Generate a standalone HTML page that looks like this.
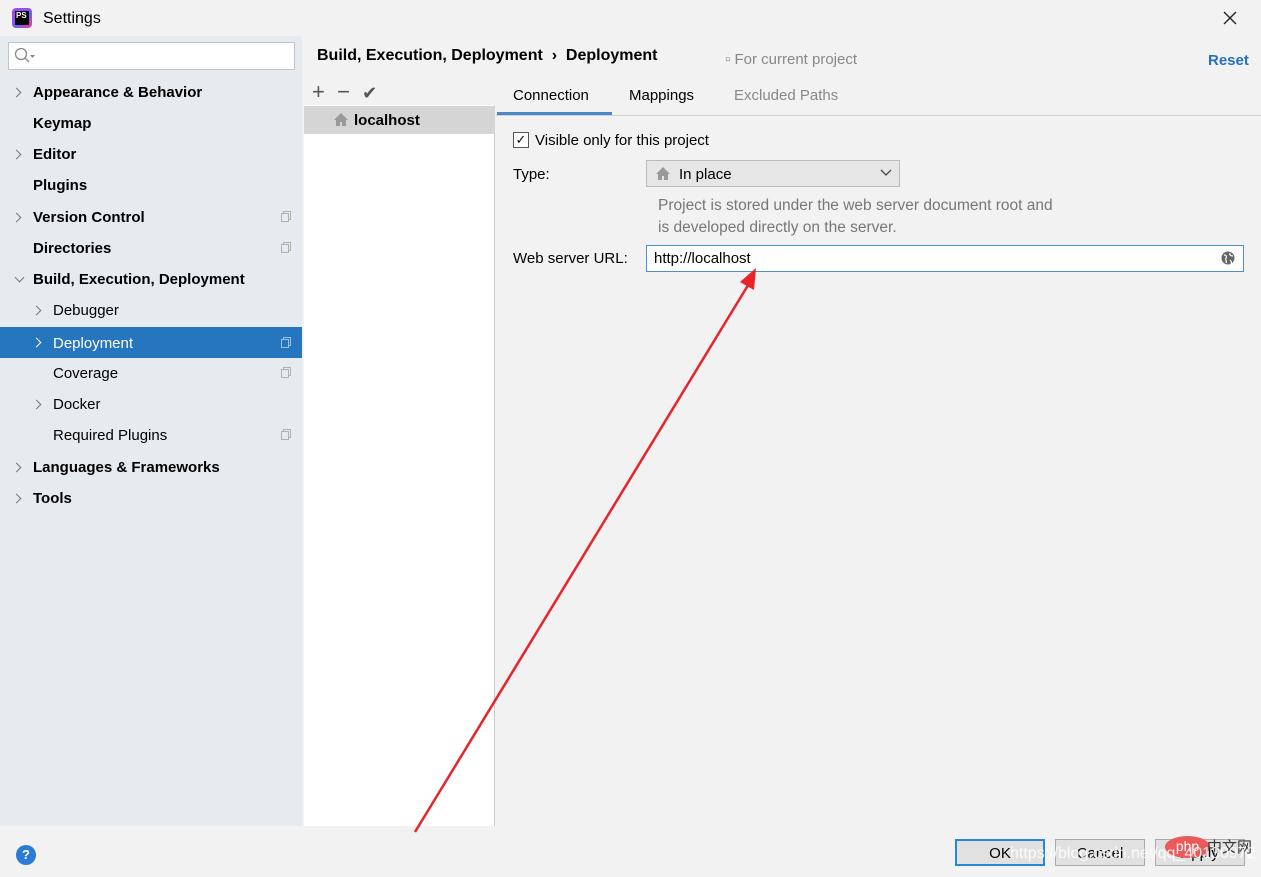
<!DOCTYPE html><html><head><style>
*{margin:0;padding:0;box-sizing:border-box}
body{width:1261px;height:877px;background:#f2f2f2;font-family:"Liberation Sans","DejaVu Sans",sans-serif;font-size:15px;color:#000;position:relative;overflow:hidden}
.a{position:absolute}
.side{left:0;top:36px;width:302px;height:790px;background:#e6ebf0}
.row{position:absolute;left:0;width:302px;height:31px;line-height:33px}
.b{font-weight:bold}
.chev{position:absolute;width:7px;height:7px;border-right:1.5px solid #777;border-bottom:1.5px solid #777}
.cp{position:absolute;right:13px;top:12px;width:8px;height:9px;border:1px solid #b0b0b0;box-shadow:2px -2px 0 -1px #e6ebf0,2px -2px 0 0 #b0b0b0}
</style></head><body>
<div class="a" style="left:12px;top:8px;width:20px;height:20px;background:linear-gradient(135deg,#b345f1,#765af8 60%,#ff318c);border-radius:4px"></div>
<div class="a" style="left:15px;top:11px;width:14px;height:14px;background:#000;color:#fff;font-size:8px;font-weight:bold;line-height:9px;padding-left:1px">PS</div>
<div class="a" style="left:43px;top:10px;font-size:16px">Settings</div>
<svg class="a" style="left:1223px;top:11px" width="14" height="14"><path d="M1 1L13 13M13 1L1 13" stroke="#222" stroke-width="1.4"/></svg>
<div class="a side"></div>
<div class="a" style="left:8px;top:42px;width:287px;height:28px;background:#fff;border:1px solid #c4c4c4"></div>
<svg class="a" style="left:14px;top:47px" width="24" height="18"><circle cx="7" cy="7" r="5.5" fill="none" stroke="#888" stroke-width="1.3"/><line x1="11" y1="11" x2="15" y2="15" stroke="#888" stroke-width="1.3"/><path d="M16 8h5l-2.5 3z" fill="#888"/></svg>
<div class="row b" style="top:76px;padding-left:33px">Appearance &amp; Behavior</div>
<div class="row b" style="top:107px;padding-left:33px">Keymap</div>
<div class="row b" style="top:138px;padding-left:33px">Editor</div>
<div class="row b" style="top:169px;padding-left:33px">Plugins</div>
<div class="row b" style="top:201px;padding-left:33px">Version Control<span class="cp"></span></div>
<div class="row b" style="top:232px;padding-left:33px">Directories<span class="cp"></span></div>
<div class="row b" style="top:263px;padding-left:33px">Build, Execution, Deployment</div>
<div class="row" style="top:294px;padding-left:53px">Debugger</div>
<div class="row" style="top:327px;padding-left:53px;background:#2675bf;color:#fff">Deployment<span class="cp" style="border-color:#9bc0e4;box-shadow:2px -2px 0 -1px #2675bf,2px -2px 0 0 #9bc0e4"></span></div>
<div class="row" style="top:357px;padding-left:53px">Coverage<span class="cp"></span></div>
<div class="row" style="top:388px;padding-left:53px">Docker</div>
<div class="row" style="top:419px;padding-left:53px">Required Plugins<span class="cp"></span></div>
<div class="row b" style="top:451px;padding-left:33px">Languages &amp; Frameworks</div>
<div class="row b" style="top:482px;padding-left:33px">Tools</div>
<div class="chev" style="left:13px;top:89px;transform:rotate(-45deg)"></div>
<div class="chev" style="left:13px;top:151px;transform:rotate(-45deg)"></div>
<div class="chev" style="left:13px;top:214px;transform:rotate(-45deg)"></div>
<div class="chev" style="left:16px;top:274px;transform:rotate(45deg)"></div>
<div class="chev" style="left:33px;top:307px;transform:rotate(-45deg)"></div>
<div class="chev" style="left:33px;top:339px;transform:rotate(-45deg);border-color:#fff"></div>
<div class="chev" style="left:33px;top:401px;transform:rotate(-45deg)"></div>
<div class="chev" style="left:13px;top:464px;transform:rotate(-45deg)"></div>
<div class="chev" style="left:13px;top:495px;transform:rotate(-45deg)"></div>
<div class="a b" style="left:317px;top:47px;font-size:16px">Build, Execution, Deployment &nbsp;›&nbsp; Deployment</div>
<div class="a" style="left:725px;top:51px;color:#888">▫ For current project</div>
<div class="a b" style="left:1208px;top:52px;color:#2470c4">Reset</div>
<div class="a" style="left:304px;top:76px;width:191px;height:750px;background:#fff;border-right:1px solid #c9c9c9"></div>
<div class="a" style="left:304px;top:76px;width:191px;height:29px;background:#f2f2f2"></div>
<div class="a" style="left:312px;top:79px;font-size:22px;color:#555">+ &nbsp;− &nbsp;<span style="font-size:18px">✔</span></div>
<div class="a" style="left:304px;top:106px;width:191px;height:28px;background:#d5d5d5"></div>
<svg class="a" style="left:333px;top:112px" width="16" height="15"><path d="M8 1L1 8h2v6h4v-4h2v4h4V8h2z" fill="#999"/></svg>
<div class="a b" style="left:354px;top:112px">localhost</div>
<div class="a" style="left:496px;top:115px;width:765px;height:1px;background:#d0d0d0"></div>
<div class="a" style="left:497px;top:112px;width:115px;height:3px;background:#4a88c7"></div>
<div class="a" style="left:513px;top:87px">Connection</div>
<div class="a" style="left:629px;top:87px">Mappings</div>
<div class="a" style="left:734px;top:87px;color:#888">Excluded Paths</div>
<div class="a" style="left:513px;top:132px;width:16px;height:16px;border:1px solid #555;background:#fff;font-size:13px;line-height:14px;text-align:center">✓</div>
<div class="a" style="left:535px;top:132px">Visible only for this project</div>
<div class="a" style="left:513px;top:166px">Type:</div>
<div class="a" style="left:646px;top:160px;width:254px;height:27px;background:#e6e6e6;border:1px solid #bbb"></div>
<svg class="a" style="left:655px;top:166px" width="16" height="15"><path d="M8 1L1 8h2v6h4v-4h2v4h4V8h2z" fill="#999"/></svg>
<div class="a" style="left:679px;top:166px">In place</div>
<svg class="a" style="left:880px;top:169px" width="12" height="8"><path d="M1 1l5 5 5-5" fill="none" stroke="#444" stroke-width="1.3"/></svg>
<div class="a" style="left:658px;top:195px;color:#777;line-height:22px;font-size:15.5px">Project is stored under the web server document root and<br>is developed directly on the server.</div>
<div class="a" style="left:513px;top:250px">Web server URL:</div>
<div class="a" style="left:646px;top:245px;width:598px;height:27px;background:#fff;border:1px solid #4a8fd9"></div>
<div class="a" style="left:654px;top:250px">http://localhost</div>
<svg class="a" style="left:1221px;top:251px" width="14" height="14"><circle cx="7" cy="7" r="6.5" fill="#666"/><path d="M3 4c2 0 3 1 2 3s1 3 0 5M9 2c-1 2 1 3 3 3M9 9c1 1 2 2 1 4" stroke="#fff" stroke-width="1.2" fill="none"/></svg>
<div class="a" style="left:0;top:826px;width:1261px;height:51px;background:#f2f2f2"></div>
<svg class="a" style="left:0;top:0" width="1261" height="877"><line x1="415" y1="832" x2="750" y2="282" stroke="#e8232a" stroke-width="2.5"/><path d="M756 268l-2 22-14-8z" fill="#e8232a"/></svg>
<div class="a" style="left:16px;top:845px;width:20px;height:20px;border-radius:50%;background:#2b7ad6;color:#fff;font-weight:bold;text-align:center;line-height:20px;font-size:13px">?</div>
<div class="a" style="left:955px;top:839px;width:90px;height:27px;border:2px solid #2b86d9;background:#e1e1e1;text-align:center;line-height:25px">OK</div>
<div class="a" style="left:1055px;top:839px;width:90px;height:27px;border:1px solid #aaa;background:#e1e1e1;text-align:center;line-height:27px">Cancel</div>
<div class="a" style="left:1155px;top:839px;width:90px;height:27px;border:1px solid #aaa;background:#e1e1e1;text-align:center;line-height:27px">Apply</div>
<div class="a" style="left:1165px;top:836px;width:45px;height:22px;border-radius:50%;background:#ea5a5a;color:#fff;font-size:14px;text-align:center;line-height:20px">php</div>
<div class="a" style="left:1207px;top:836px;color:#333;font-family:'Noto Sans CJK SC',sans-serif;font-size:15px">中文网</div>
<div class="a" style="left:1010px;top:845px;color:rgba(255,255,255,.85);font-size:16px">https://blog.csdn.net/qq_40130972</div>
</body></html>
